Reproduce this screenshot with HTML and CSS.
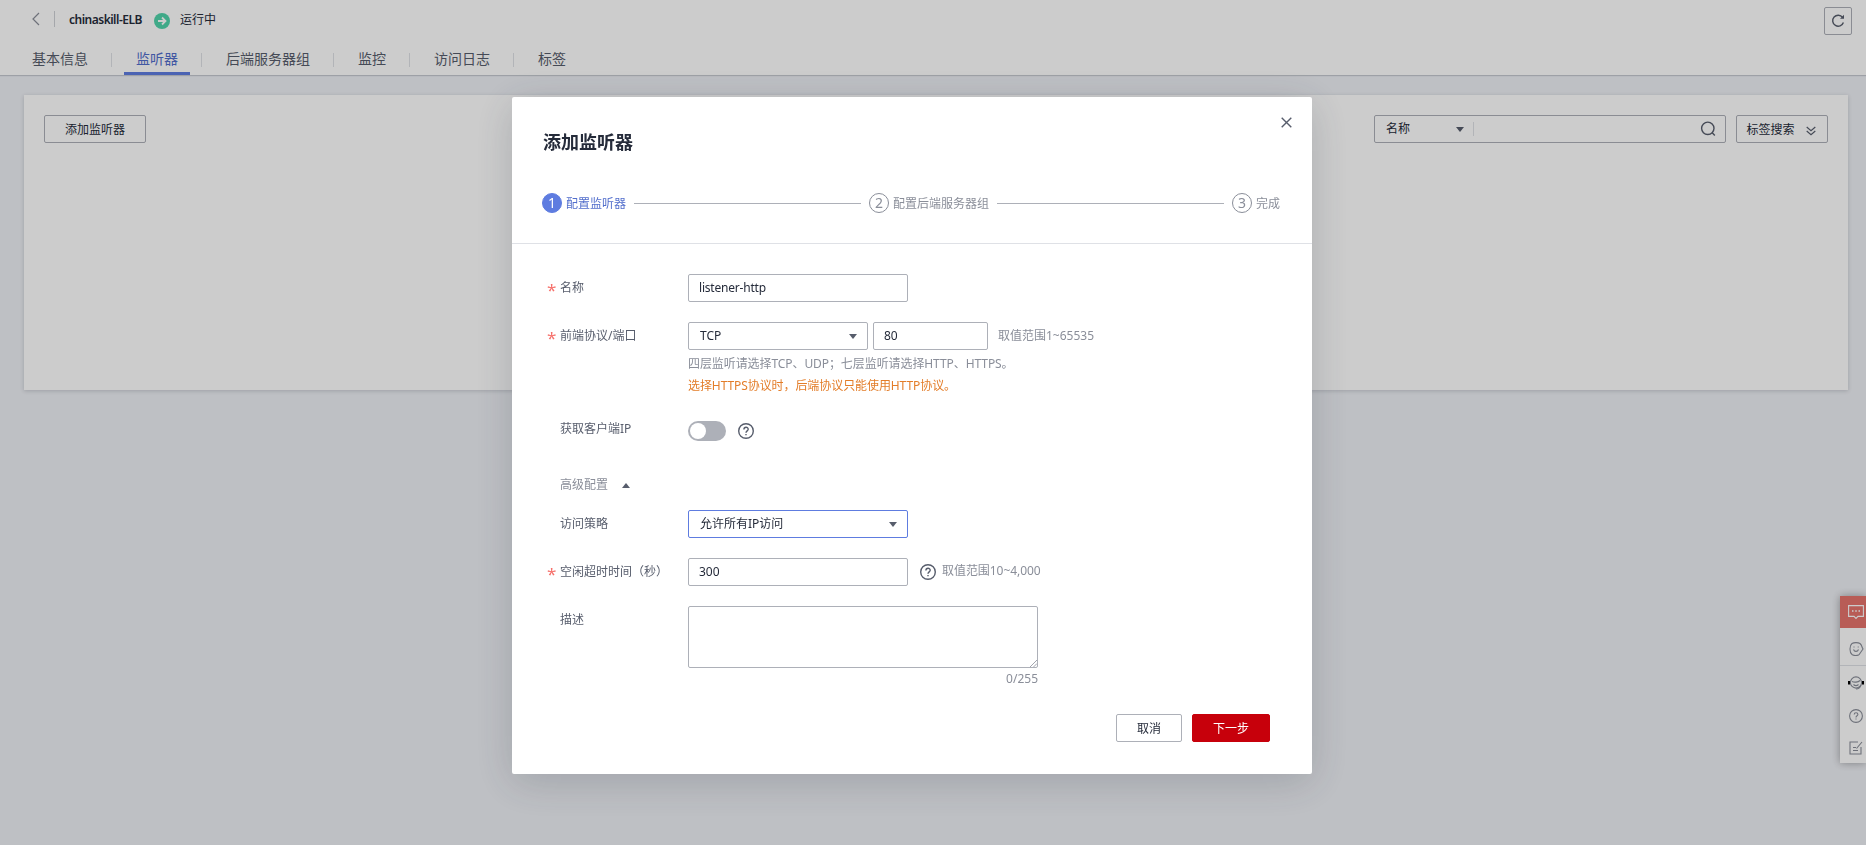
FILE: index.html
```html
<!DOCTYPE html>
<html lang="zh-CN">
<head>
<meta charset="utf-8">
<title>添加监听器</title>
<link rel="stylesheet" href="styles.css">
</head>
<body>
<div class="page">
  <header class="header">
    <div class="title-row">
      <svg class="back" width="8" height="14" viewBox="0 0 8 14"><path d="M7 1L1 7l6 6"/></svg>
      <span class="title-sep"></span>
      <b class="instance">chinaskill-ELB</b>
      <svg class="status-icon" width="16" height="16" viewBox="0 0 16 16"><circle cx="8" cy="8" r="8" fill="#50d4ab"/><path d="M4 8h7M8 4.5L11.5 8 8 11.5" fill="none" stroke="#fff" stroke-width="1.8"/></svg>
      <span class="status">运行中</span>
      <button class="refresh"><svg width="14" height="14" viewBox="0 0 14 14"><path d="M11.6 3.4A5.5 5.5 0 1 0 12.4 8.500" fill="none" stroke="#575d6c" stroke-width="1.4"/><path d="M13 .8v4H9z" fill="#575d6c"/></svg></button>
    </div>
    <nav class="tabs">
      <a class="tab">基本信息</a>
      <a class="tab active">监听器</a>
      <a class="tab">后端服务器组</a>
      <a class="tab">监控</a>
      <a class="tab">访问日志</a>
      <a class="tab">标签</a>
    </nav>
  </header>
  <main class="panel">
    <button class="btn add">添加监听器</button>
    <div class="search">
      <span class="search-key">名称</span>
      <i class="caret"></i>
      <span class="search-sep"></span>
      <svg class="search-icon" width="16" height="16" viewBox="0 0 16 16"><circle cx="7.800" cy="7.300" r="6.200" /><path d="M12 11.500l2.800 3"/></svg>
    </div>
    <button class="btn tag-search">标签搜索<svg width="10" height="10" viewBox="0 0 10 10"><path d="M.7 1L5 4.600 9.300 1M.7 5L5 8.600 9.300 5"/></svg></button>
  </main>
</div>

<aside class="dock">
  <div class="dock-chat"><svg width="16" height="15" viewBox="0 0 16 15"><path d="M.6.6h14.800v10.800H10l-2 2-2-2H.6z"/><path d="M4 6h1.500M7.250 6h1.500M10.500 6H12" stroke-width="1.500"/></svg></div>
  <div class="dock-list">
    <div class="dock-item smile"><svg width="15" height="14" viewBox="0 0 15 14"><path d="M11 1.500C9 .3 5 .3 3 1.500.3 3.500.3 10.500 3 12.500c2 1.200 5 1.200 7 .3M11 1.500c1 1 1.700 2 2 3.500L14 7l-4 5.800"/><path d="M4.500 7.500c1 2.500 4 2.500 5 0M4.500 5h1M8.700 5h1"/></svg></div>
    <div class="dock-item agent"><svg width="16" height="14" viewBox="0 0 16 14"><circle cx="8" cy="6.500" r="5.600"/><path d="M4 5.500c2 1 6 1 8-1M5.500 8.500c1.500 1.500 3.500 1.500 5 0M13 9c-1 3-3 4-5 4"/><path d="M1 5v3.500M15 5v3.500" stroke="#000" stroke-width="2"/></svg></div>
    <div class="dock-item"><svg width="14" height="14" viewBox="0 0 14 14"><circle cx="7" cy="7" r="6.400"/><path d="M5.200 5.600c0-2.500 3.700-2.400 3.700-.1C8.900 6.800 7 6.800 7 8.400M7 9.600v1"/></svg></div>
    <div class="dock-item edit"><svg width="14" height="14" viewBox="0 0 14 14"><path d="M9 1H1v12h11V6M4 6.500h3M4 9.500h5M7.500 7.500L13 1"/></svg></div>
  </div>
</aside>

<div class="mask">
  <section class="dialog">
    <div class="dialog-head">
      <h2>添加监听器</h2>
      <svg class="close" width="11" height="11" viewBox="0 0 11 11"><path d="M.7.7l9.600 9.600M10.300.7L.7 10.300"/></svg>
    </div>
    <div class="steps">
      <span class="num current">1</span><span class="step current-text">配置监听器</span>
      <span class="line"></span>
      <span class="num">2</span><span class="step">配置后端服务器组</span>
      <span class="line"></span>
      <span class="num">3</span><span class="step">完成</span>
    </div>
    <div class="form">
      <div class="row">
        <label class="label required">名称</label>
        <div class="field w220"><span class="latin-tight">listener-http</span></div>
      </div>
      <div class="row protocol">
        <label class="label required">前端协议/端口</label>
        <div class="stack">
          <div class="inline">
            <div class="field select w180">TCP<i class="caret"></i></div>
            <div class="field w115">80</div>
            <span class="hint">取值范围1~65535</span>
          </div>
          <p class="note">四层监听请选择TCP、UDP；七层监听请选择HTTP、HTTPS。</p>
          <p class="note warn">选择HTTPS协议时，后端协议只能使用HTTP协议。</p>
        </div>
      </div>
      <div class="row client-ip">
        <label class="label">获取客户端IP</label>
        <span class="toggle"></span>
        <svg class="help" width="16" height="16" viewBox="0 0 16 16"><circle cx="8" cy="8" r="7.300"/><path d="M5.900 6.500c0-3 4.300-2.900 4.300-.2C10.200 7.900 8 7.900 8 9.700M8 11v1.300"/></svg>
      </div>
      <div class="advanced">高级配置<i class="caret up"></i></div>
      <div class="row">
        <label class="label">访问策略</label>
        <div class="field select w220 focus">允许所有IP访问<i class="caret"></i></div>
      </div>
      <div class="row">
        <label class="label required">空闲超时时间（秒）</label>
        <div class="field w220">300</div>
        <svg class="help low" width="16" height="16" viewBox="0 0 16 16"><circle cx="8" cy="8" r="7.300"/><path d="M5.900 6.500c0-3 4.300-2.900 4.300-.2C10.200 7.900 8 7.900 8 9.700M8 11v1.300"/></svg>
        <span class="hint idle">取值范围10~4,000</span>
      </div>
      <div class="row desc">
        <label class="label">描述</label>
        <div class="area-wrap">
          <div class="area"><svg width="8" height="8" viewBox="0 0 8 8"><path d="M1 8l7-7M4.500 8L8 4.500"/></svg></div>
          <span class="count">0/255</span>
        </div>
      </div>
    </div>
    <div class="actions">
      <button class="btn cancel">取消</button>
      <button class="btn primary">下一步</button>
    </div>
  </section>
</div>
</body>
</html>
```

FILE: styles.css
```css
* { box-sizing: border-box; }
body {
  margin: 0;
  height: 845px;
  overflow: hidden;
  background: #eef0f5;
  color: #252b3a;
  font: 12px/18px "Noto Sans", "Noto Sans CJK SC", sans-serif;
}
svg { display: block; flex: none; fill: none; }
button { font: inherit; color: inherit; }

.header { height: 75px; background: #fff; box-shadow: 0 1px 1px rgba(37, 43, 58, .2); }
.title-row { display: flex; align-items: center; height: 42px; padding: 0 14px 0 32px; }
.back { stroke: #8a8e99; stroke-width: 1.2; margin-top: -4px; }
.title-sep { width: 1px; height: 16px; margin: -4px 14px 0 14px; background: #cfd1d6; }
.instance { width: 75px; margin-top: -2px; font-weight: 600; letter-spacing: -.5px; white-space: nowrap; }
.status-icon { margin: 0 10px; }
.status { margin-top: -2px; }
.refresh {
  display: flex; align-items: center; justify-content: center;
  width: 28px; height: 28px; margin-left: auto; padding: 0;
  border: 1px solid #adb0b8; border-radius: 2px; background: none;
}
.tabs { display: flex; padding-left: 20px; height: 33px; }
.tab { position: relative; display: flex; margin-right: 24px; padding: 8px 12px 0; font-size: 14px; color: #575d6c; }
.tab:not(:last-child)::after {
  content: ""; position: absolute; right: -12px; top: 11px; width: 1px; height: 14px; background: #dfe1e6;
}
.tab.active { color: #526ecc; }
.tab.active::before {
  content: ""; position: absolute; left: 0; right: 0; bottom: 0; height: 3px; background: #5e7ce0;
}
.panel {
  display: flex; align-items: flex-start; height: 295px; margin: 20px 18px 0 24px; padding: 20px;
  background: #fff; box-shadow: 0 1px 4px rgba(37, 43, 58, .2);
}
.btn {
  height: 28px; padding: 1px 0 0; border: 1px solid #adb0b8; border-radius: 2px; background: #fff;
  display: flex; align-items: center; justify-content: center;
}
.add { width: 102px; }
.search {
  display: flex; align-items: center; width: 352px; height: 28px; margin-left: auto; padding: 0 9px 0 11px;
  border: 1px solid #adb0b8; border-radius: 2px;
}
.search-key { width: 70px; }
.caret { width: 0; height: 0; border: 4px solid transparent; border-top: 5px solid #575d6c; border-bottom: 0; }
.caret.up { border-top: 0; border-bottom: 5px solid #575d6c; }
.search-sep { width: 1px; height: 14px; margin-left: 9px; background: #dfe1e6; }
.search-icon { margin-left: auto; stroke: #575d6c; stroke-width: 1.4; }
.tag-search { width: 92px; margin-left: 10px; gap: 11px; padding-right: 2px; }
.tag-search svg { stroke: #575d6c; stroke-width: 1.2; margin-top: 3px; }

.dock { position: fixed; top: 596px; right: 0; width: 26px; box-shadow: 0 0 8px rgba(0, 0, 0, .35); background: #fff; }
.dock svg { stroke: #8a8e99; stroke-width: 1.1; }
.dock-chat { height: 32px; padding: 9px 0 0 8px; background: #e6736c; }
.dock .dock-chat svg { stroke: #fff; }
.dock-list { padding-top: 4px; }
.dock-item { display: flex; align-items: center; height: 33px; padding-left: 9px; }
.smile { height: 34px; border-bottom: 1px solid #dfe1e6; }
.agent { padding-left: 8px; }
.edit { height: 31px; }

.mask { position: fixed; inset: 0; padding: 97px 0 0 512px; background: rgba(0, 0, 0, .2); }
.dialog {
  width: 800px; height: 677px; background: #fff; border-radius: 2px;
  box-shadow: 0 8px 40px rgba(37, 43, 58, .2);
}
.dialog-head { display: flex; justify-content: space-between; padding: 20px 20px 0 31px; height: 96px; }
h2 { margin: 11px 0 0; font-size: 18px; line-height: 28px; font-weight: 600; }
.close { stroke: #575d6c; stroke-width: 1.4; }
.steps { display: flex; align-items: center; height: 51px; padding: 0 32px 31px 30px; border-bottom: 1px solid #dfe1e6; }
.num {
  width: 20px; height: 20px; flex: none; border: 1px solid #8a8e99; border-radius: 50%;
  font-size: 14px; line-height: 18px; text-align: center; color: #8a8e99;
}
.current { background: #5e7ce0; border-color: #5e7ce0; color: #fff; }
.step { margin-left: 4px; padding-top: 2px; color: #8a8e99; white-space: nowrap; }
.current-text { color: #526ecc; }
.line { flex: 1; height: 1px; margin: 1px 8px 0; background: #adb0b8; }

.form { padding: 30px 0 0 36px; }
.row { display: flex; align-items: flex-start; height: 28px; margin-bottom: 20px; }
.label { position: relative; flex: none; width: 140px; padding-left: 12px; line-height: 28px; color: #575d6c; white-space: nowrap; }
.required::before { content: "*"; position: absolute; left: -1px; top: 2px; font-size: 17px; color: #f66f6a; }
.field {
  display: flex; align-items: center; justify-content: space-between; height: 28px; flex: none;
  padding: 0 10px; border: 1px solid #adb0b8; border-radius: 2px;
}
.select { padding-left: 11px; }
.latin-tight { letter-spacing: -.2px; }
.w220 { width: 220px; }
.w180 { width: 180px; }
.w115 { width: 115px; }
.focus { border-color: #5e7ce0; }
.protocol { height: 79px; }
.inline { display: flex; gap: 5px; }
.hint { margin-left: 5px; line-height: 27px; color: #8a8e99; }
.note { margin: 5px 0 0; color: #8a8e99; white-space: nowrap; letter-spacing: -.08px; }
.warn { margin-top: 4px; color: #e37d29; }
.client-ip { height: 28px; margin-bottom: 27px; }
.client-ip .label { line-height: 16px; }
.toggle { width: 38px; height: 20px; border-radius: 10px; background: #adb0b8; padding: 2px; }
.toggle::before { content: ""; display: block; width: 16px; height: 16px; border-radius: 50%; background: #fff; }
.help { margin: 2px 0 0 12px; stroke: #575d6c; stroke-width: 1.4; }
.low { margin-top: 6px; }
.advanced { display: flex; align-items: center; gap: 14px; height: 18px; margin-bottom: 16px; padding-left: 12px; color: #8a8e99; }
.idle { margin-left: 6px; line-height: 26px; letter-spacing: -.05px; }
.desc { height: 81px; margin: 0; }
.area { display: flex; align-items: flex-end; justify-content: flex-end; width: 350px; height: 62px; border: 1px solid #adb0b8; border-radius: 2px; }
.area svg { stroke: #8a8e99; stroke-width: .8; }
.count { display: block; margin-top: 2px; text-align: right; color: #8a8e99; }
.actions { display: flex; justify-content: flex-end; gap: 10px; padding: 27px 42px 0 0; }
.cancel { width: 66px; }
.primary { width: 78px; border-color: #c7000b; background: #c7000b; color: #fff; }
```
